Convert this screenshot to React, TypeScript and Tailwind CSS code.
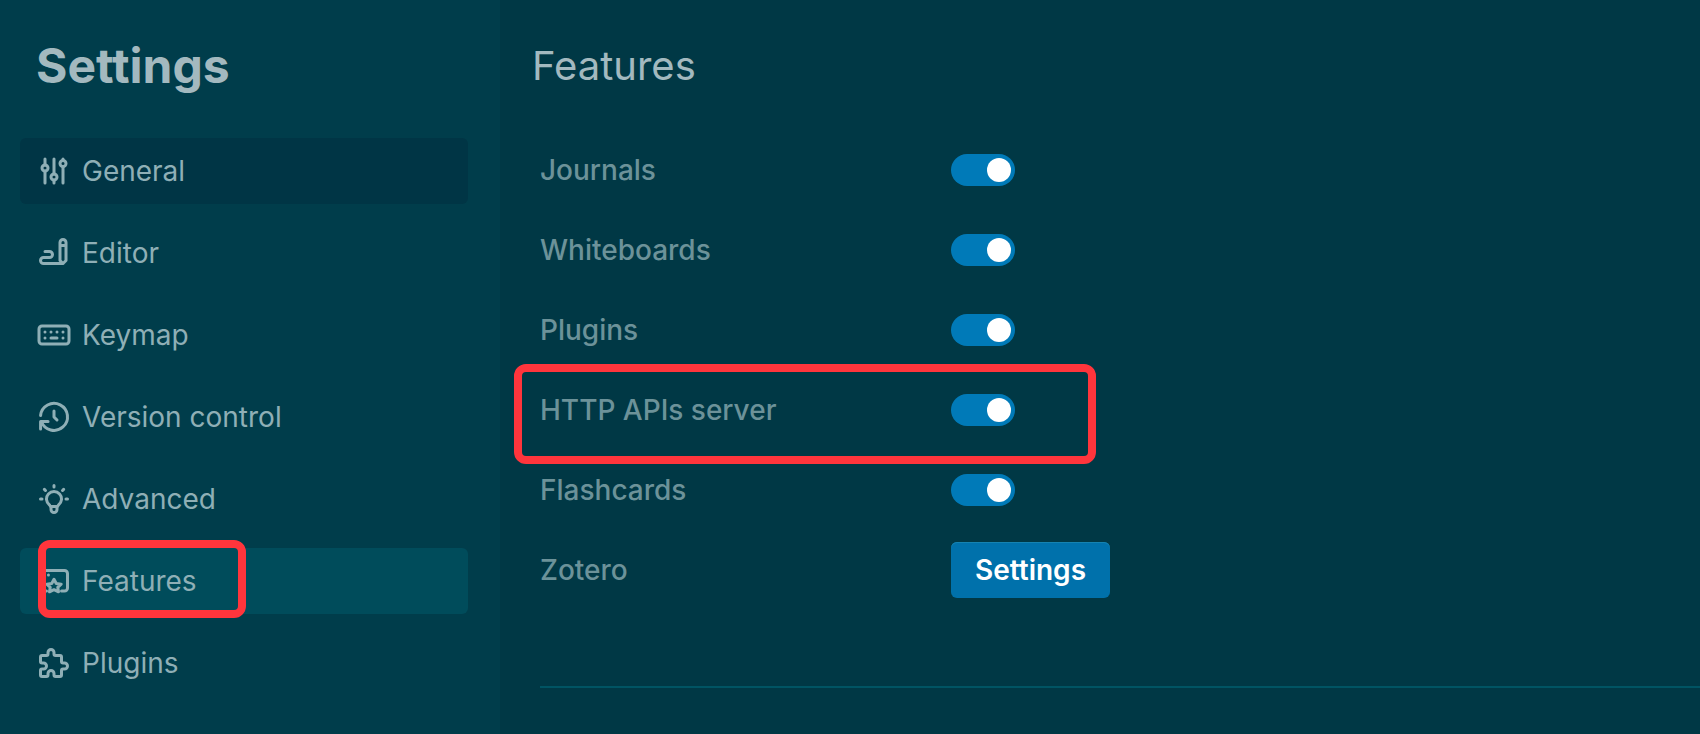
import { useState } from "react";
import type { ReactNode } from "react";

type NavItem = { id: string; label: string; icon: ReactNode };

const navItems: NavItem[] = [
  {
    id: "general",
    label: "General",
    icon: (
      <>
        <circle cx="6" cy="10" r="2" />
        <path d="M6 4v4M6 12v8" />
        <circle cx="12" cy="16" r="2" />
        <path d="M12 4v10M12 18v2" />
        <circle cx="18" cy="7" r="2" />
        <path d="M18 4v1M18 9v11" />
      </>
    ),
  },
  {
    id: "editor",
    label: "Editor",
    icon: (
      <path d="M20 17v-12c0-1.121-.879-2-2-2s-2 .879-2 2v12l2 2l2-2zM16 7h4M18 19h-13a2 2 0 1 1 0-4h4a2 2 0 1 0 0-4h-3" />
    ),
  },
  {
    id: "keymap",
    label: "Keymap",
    icon: (
      <>
        <rect x="2" y="6" width="20" height="12" rx="2" />
        <path d="M6 10v.01M10 10v.01M14 10v.01M18 10v.01M6 14v.01M18 14v.01M10 14h4" />
      </>
    ),
  },
  {
    id: "version-control",
    label: "Version control",
    icon: <path d="M12 8v4l2 2M3.05 11a9 9 0 1 1 .5 4m-.5 5v-5h5" />,
  },
  {
    id: "advanced",
    label: "Advanced",
    icon: (
      <path d="M3 12h1m8-9v1m8 8h1m-15.4-6.4l.7.7m12.1-.7l-.7.7M9 16a5 5 0 1 1 6 0a3.5 3.5 0 0 0-1 3a2 2 0 0 1-4 0a3.5 3.5 0 0 0-1-3M9.7 17h4.6" />
    ),
  },
  {
    id: "features",
    label: "Features",
    icon: (
      <>
        <path d="M7 18.7h-2a2 2 0 0 1-2-2v-9.7a2 2 0 0 1 2-2h14a2 2 0 0 1 2 2v9.7a2 2 0 0 1-2 2h-2" />
        <path d="M8.3 8v.01" />
        <path d="M12 10.9l1.5 2.7l3.3.5l-2.3 2.1l.5 3l-3-1.4l-3 1.4l.5-3l-2.3-2.1l3.3-.5z" />
      </>
    ),
  },
  {
    id: "plugins",
    label: "Plugins",
    icon: (
      <path d="M4 7h3a1 1 0 0 0 1-1v-1a2 2 0 0 1 4 0v1a1 1 0 0 0 1 1h3a1 1 0 0 1 1 1v3a1 1 0 0 0 1 1h1a2 2 0 0 1 0 4h-1a1 1 0 0 0-1 1v3a1 1 0 0 1-1 1h-3a1 1 0 0 1-1-1v-1a2 2 0 0 0-4 0v1a1 1 0 0 1-1 1h-3a1 1 0 0 1-1-1v-3a1 1 0 0 1 1-1h1a2 2 0 0 0 0-4h-1a1 1 0 0 1-1-1v-3a1 1 0 0 1 1-1" />
    ),
  },
];

const features = [
  { id: "journals", label: "Journals" },
  { id: "whiteboards", label: "Whiteboards" },
  { id: "plugins-enabled", label: "Plugins" },
  { id: "http-server", label: "HTTP APIs server", highlighted: true },
  { id: "flashcards", label: "Flashcards" },
];

function NavIcon({ children }: { children: ReactNode }) {
  return (
    <svg
      viewBox="0 0 24 24"
      className="size-9 shrink-0"
      fill="none"
      stroke="currentColor"
      strokeWidth="2"
      strokeLinecap="round"
      strokeLinejoin="round"
      aria-hidden="true"
    >
      {children}
    </svg>
  );
}

function Toggle({ id }: { id: string }) {
  const [on, setOn] = useState(true);
  return (
    <input
      id={id}
      type="checkbox"
      role="switch"
      checked={on}
      onChange={() => setOn(!on)}
      className="flex h-8 w-16 cursor-pointer appearance-none items-center rounded-full bg-[#5a7b82] px-1 before:size-6 before:rounded-full before:bg-white checked:justify-end checked:bg-[#007ab8]"
    />
  );
}

function navBackground(id: string, active: string) {
  if (id === active) return "bg-[#004c5b]";
  if (id === "general") return "bg-[#003545]";
  return "";
}

export default function App() {
  const [active, setActive] = useState("features");
  return (
    <div className="flex min-h-screen bg-[#003845] font-['Inter',sans-serif]">
      <aside className="w-[500px] shrink-0 bg-[#003d4b] pt-9 pr-8 pl-5">
        <h1 className="pl-4 text-5xl leading-[60px] font-bold text-[#a3b9bf]">Settings</h1>
        <nav className="mt-[42px]">
          <ul className="flex flex-col gap-4">
            {navItems.map((item) => (
              <li key={item.id} className="relative">
                <button
                  type="button"
                  onClick={() => setActive(item.id)}
                  className={`flex h-[66px] w-full items-center gap-2.5 rounded-md px-4 text-left text-[28px] text-[#8fafb6] ${navBackground(item.id, active)}`}
                >
                  <NavIcon>{item.icon}</NavIcon>
                  {item.label}
                </button>
                {item.id === "features" && (
                  <span className="pointer-events-none absolute -top-2 -bottom-1 left-[18px] w-52 rounded-xl border-8 border-[#ff353c]" />
                )}
              </li>
            ))}
          </ul>
        </nav>
      </aside>
      <main className="min-w-0 flex-1 pt-9 pl-8">
        <h2 className="text-[40px] leading-[60px] text-[#a3b9bf]">Features</h2>
        <div className="mt-[34px] pl-2">
          {features.map((feature) => (
            <div key={feature.id} className="relative flex h-20 items-center">
              <label htmlFor={feature.id} className="w-[411px] text-[28px] font-medium text-[#6c9299]">
                {feature.label}
              </label>
              <Toggle id={feature.id} />
              {feature.highlighted && (
                <span className="pointer-events-none absolute -top-1.5 -bottom-3.5 -left-[26px] w-[582px] rounded-xl border-8 border-[#ff353c]" />
              )}
            </div>
          ))}
          <div className="flex h-20 items-center">
            <span id="zotero-label" className="w-[411px] text-[28px] font-medium text-[#6c9299]">
              Zotero
            </span>
            <button
              type="button"
              aria-describedby="zotero-label"
              className="h-14 rounded-md bg-[#0071ab] px-6 text-[28px] leading-8 font-semibold text-white shadow-[inset_0_1px_0_#1583b2]"
            >
              Settings
            </button>
          </div>
          <hr className="mt-19 border-t-2 border-[#005463]" />
        </div>
      </main>
    </div>
  );
}
